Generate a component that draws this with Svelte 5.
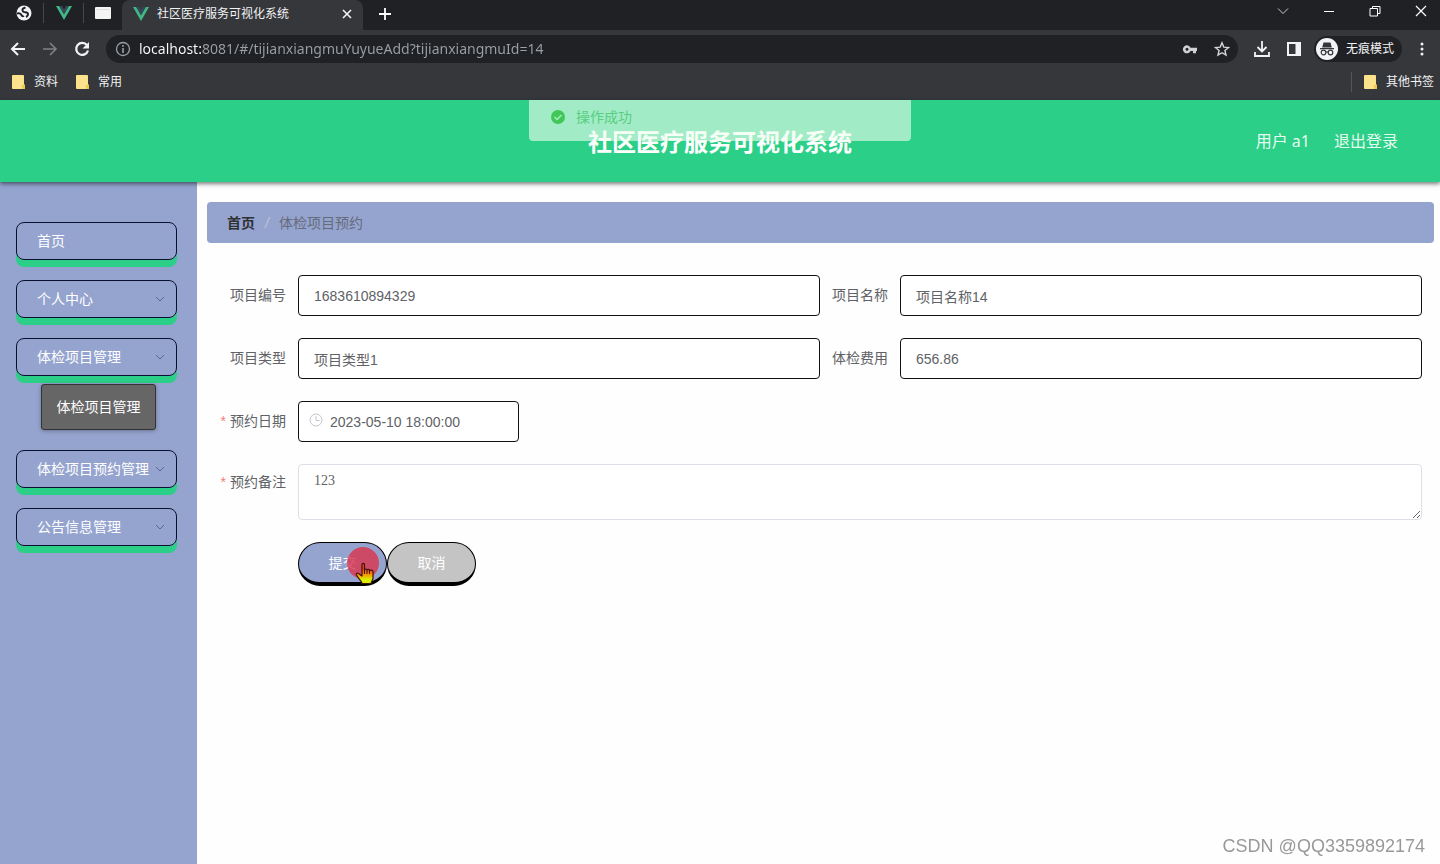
<script lang="ts">
	interface MenuItem { name: string; arrow: boolean; children: string[] }

	const menus: MenuItem[] = [
		{ name: '首页', arrow: false, children: [] },
		{ name: '个人中心', arrow: true, children: [] },
		{ name: '体检项目管理', arrow: true, children: ['体检项目管理'] },
		{ name: '体检项目预约管理', arrow: true, children: [] },
		{ name: '公告信息管理', arrow: true, children: [] },
	];

	const bookmarks = ['资料', '常用'];

	let url = $state('localhost:8081/#/tijianxiangmuYuyueAdd?tijianxiangmuId=14');
	let form = $state({
		bianhao: '1683610894329',
		mingcheng: '项目名称14',
		leixing: '项目类型1',
		feiyong: '656.86',
		riqi: '2023-05-10 18:00:00',
		beizhu: '123',
	});
</script>

{#snippet vue()}
	<svg width="16" height="14" viewBox="0 0 16 14"><path fill="#41b883" d="M0 0h3.2L8 8.3 12.8 0H16L8 14z" /><path fill="#35495e" d="M3.2 0h2.9L8 3.4 9.9 0h2.9L8 8.3z" /></svg>
{/snippet}

{#snippet folder()}
	<svg width="13" height="14" viewBox="0 0 13 14"><path fill="#fce28a" d="M1 0h10a1 1 0 0 1 1 1v8l1 1v3a1 1 0 0 1-1 1H1a1 1 0 0 1-1-1V1a1 1 0 0 1 1-1z" /><path fill="#f0c850" d="M10 10h3v3a1 1 0 0 1-1 1h-2z" /></svg>
{/snippet}

<div class="page">
	<div class="browser">
		<div class="tabs">
			<button class="pin" aria-label="新标签页">
				<svg width="16" height="16" viewBox="0 0 16 16"><circle cx="8" cy="8" r="7.5" fill="#f1f3f4" /><path fill="none" stroke="#202124" stroke-width="2" d="M9.5 2.500C7 3 5.500 4.500 7 6.500c1 1.300 3.200.3 4.500 1.500 1.200 1.300.2 3.200-1.500 4M1 8.500c2-.5 4 .3 4.500 1.700.4 1.200 1.700.8 2 1.800" /></svg>
			</button>
			<button class="pin" aria-label="Vue">{@render vue()}</button>
			<button class="pin" aria-label="窗口">
				<svg width="16" height="12" viewBox="0 0 16 12"><rect width="16" height="12" rx="1" fill="#f4f4f4" /><path stroke="#ddd" d="M1 2.500h14" /></svg>
			</button>
			<div class="tab">
				{@render vue()}
				<span class="tab-title">社区医疗服务可视化系统</span>
				<button aria-label="关闭标签页"><svg width="10" height="10" viewBox="0 0 10 10"><path stroke="#f1f3f4" stroke-width="1.600" d="M1 1l8 8M9 1L1 9" /></svg></button>
			</div>
			<button class="plus" aria-label="打开新的标签页"><svg width="12" height="12" viewBox="0 0 12 12"><path stroke="#fff" stroke-width="1.800" d="M6 0v12M0 6h12" /></svg></button>
			<div class="win">
				<button aria-label="搜索标签页"><svg width="12" height="12" viewBox="0 0 12 12"><path fill="none" stroke="#ccc" d="M1 3.500l5 5 5-5" /></svg></button>
				<button aria-label="最小化"><svg width="12" height="12" viewBox="0 0 12 12"><path stroke="#fff" d="M1 6.500h10" /></svg></button>
				<button aria-label="还原"><svg width="12" height="12" viewBox="0 0 12 12"><path fill="none" stroke="#fff" d="M1 3.500h7.500V11H1zM3.500 3.500v-2h7.500v7H8.500" /></svg></button>
				<button aria-label="关闭"><svg width="12" height="12" viewBox="0 0 12 12"><path stroke="#fff" stroke-width="1.200" d="M1 1l10 10M11 1L1 11" /></svg></button>
			</div>
		</div>

		<div class="toolbar">
			<button aria-label="后退"><svg width="16" height="16" viewBox="0 0 16 16"><path fill="none" stroke="#f1f3f4" stroke-width="2" d="M15 8H2.500M8 2L2 8l6 6" /></svg></button>
			<button aria-label="前进"><svg width="16" height="16" viewBox="0 0 16 16"><path fill="none" stroke="#808185" stroke-width="1.600" d="M1 8h12.500M8 2l6 6-6 6" /></svg></button>
			<button aria-label="刷新"><svg width="16" height="16" viewBox="0 0 16 16"><path fill="none" stroke="#f1f3f4" stroke-width="2.200" d="M13 4.200A6 6 0 1 0 14 9.500" /><path fill="#f1f3f4" d="M15 1v6.500H8.500z" /></svg></button>
			<div class="omnibox">
				<svg width="16" height="16" viewBox="0 0 16 16"><circle cx="8" cy="8" r="6.500" fill="none" stroke="#9aa0a6" stroke-width="1.300" /><path stroke="#9aa0a6" stroke-width="1.600" d="M8 7v5M8 4v1.700" /></svg>
				<input class="url" aria-label="地址" bind:value={url} />
				<button aria-label="密码"><svg width="16" height="16" viewBox="0 0 16 16"><path fill="#d0d1d4" fill-rule="evenodd" d="M8.500 6.700A4 4 0 1 0 8.500 10H11v2.200h3V10h1V6.700zM5 6.800a1.500 1.500 0 1 1 0 3 1.500 1.500 0 0 1 0-3z" /></svg></button>
				<button aria-label="收藏"><svg width="16" height="16" viewBox="0 0 16 16"><path fill="none" stroke="#d5d6d8" stroke-width="1.400" d="M8 1.800l1.800 4.300 4.700.4-3.600 3 1.100 4.600L8 11.700l-4 2.400 1.100-4.600-3.600-3 4.700-.4z" /></svg></button>
			</div>
			<button aria-label="下载"><svg width="16" height="16" viewBox="0 0 16 16"><path fill="none" stroke="#f1f3f4" stroke-width="1.800" d="M8 0v10M3.500 6L8 10.500 12.500 6M1 11v4h14v-4" /></svg></button>
			<button aria-label="侧边栏"><svg width="16" height="16" viewBox="0 0 16 16"><path fill="#f1f3f4" fill-rule="evenodd" d="M1 1h14v14H1zM3 3v10h6.500V3z" /></svg></button>
			<button class="incognito">
				<svg width="22" height="22" viewBox="0 0 22 22"><circle cx="11" cy="11" r="11" fill="#f1f3f4" /><path fill="#35363a" d="M7.500 4.500h7l1.300 5H6.200zM4 10h14v1.200H4z" /><g fill="none" stroke="#35363a" stroke-width="1.200"><circle cx="7.500" cy="14.500" r="2.300" /><circle cx="14.500" cy="14.500" r="2.300" /><path d="M9.800 14h2.400" /></g></svg>
				无痕模式
			</button>
			<button aria-label="菜单"><svg width="16" height="16" viewBox="0 0 16 16"><g fill="#f1f3f4"><circle cx="8" cy="3" r="1.500" /><circle cx="8" cy="8" r="1.500" /><circle cx="8" cy="13" r="1.500" /></g></svg></button>
		</div>

		<div class="bookmarks">
			{#each bookmarks as b}
				<button>{@render folder()}{b}</button>
			{/each}
			<button class="other">{@render folder()}其他书签</button>
		</div>
	</div>

	<header>
		<h1>社区医疗服务可视化系统</h1>
		<div class="user">
			<span>用户 a1</span>
			<a href="#/login">退出登录</a>
		</div>
		<div class="message" role="status">
			<svg width="14" height="14" viewBox="0 0 14 14"><circle cx="7" cy="7" r="7" fill="#41c758" /><path fill="none" stroke="#a5ebc0" stroke-width="1.500" d="M3.500 7l2.500 2.500 4.500-4.500" /></svg>
			操作成功
		</div>
	</header>

	<div class="body">
		<nav>
			{#each menus as m}
				<div class="group">
					<button class="item">
						{m.name}
						{#if m.arrow}
							<svg width="10" height="10" viewBox="0 0 10 10"><path fill="none" stroke="#566794" d="M1 3l4 4 4-4" /></svg>
						{/if}
					</button>
					{#each m.children as c}
						<a class="sub" href="#/tijianxiangmu">{c}</a>
					{/each}
				</div>
			{/each}
		</nav>

		<main>
			<div class="crumb">
				<a href="#/">首页</a>
				<i>/</i>
				<span>体检项目预约</span>
			</div>

			<form onsubmit={(e) => e.preventDefault()}>
				<div class="row">
					<div class="field">
						<label for="bianhao">项目编号</label>
						<input id="bianhao" bind:value={form.bianhao} readonly />
					</div>
					<div class="field">
						<label for="mingcheng">项目名称</label>
						<input id="mingcheng" bind:value={form.mingcheng} readonly />
					</div>
				</div>
				<div class="row">
					<div class="field">
						<label for="leixing">项目类型</label>
						<input id="leixing" bind:value={form.leixing} readonly />
					</div>
					<div class="field">
						<label for="feiyong">体检费用</label>
						<input id="feiyong" bind:value={form.feiyong} readonly />
					</div>
				</div>
				<div class="field">
					<label class="must" for="riqi">预约日期</label>
					<div class="date">
						<svg width="14" height="14" viewBox="0 0 14 14"><g fill="none" stroke="#c0c4cc"><circle cx="7" cy="7" r="6" /><path d="M7 3v4.500h3.500" /></g></svg>
						<input id="riqi" bind:value={form.riqi} />
					</div>
				</div>
				<div class="field">
					<label class="must area" for="beizhu">预约备注</label>
					<textarea id="beizhu" bind:value={form.beizhu}></textarea>
				</div>
				<div class="btns">
					<button class="btn submit" type="submit">
						提交
						<svg class="pointer" width="36" height="40" viewBox="0 0 36 40">
							<circle cx="17" cy="18" r="16" fill="#d9364f" fill-opacity=".82" />
							<defs><linearGradient id="hand" x1="0" y1="0" x2="0" y2="1"><stop offset=".3" stop-color="#e8451c" /><stop offset=".6" stop-color="#f5a500" /><stop offset=".8" stop-color="#d8f000" /></linearGradient></defs>
							<path fill="url(#hand)" stroke="#40140a" stroke-width="1.200" stroke-linejoin="round" d="M16 19.500c0-1.600 2.500-1.600 2.500 0V25c.3-1.400 2.500-1.300 2.500.2.400-1.200 2.400-1 2.500.5.500-1 3.500-.7 3.500.8V33c0 2-1.500 3-2 5.500h-9c-.5-2.500-3-4-5.500-8.500-.9-1.600 1-2.700 2.300-1.300L16 31z" />
							<path stroke="#40140a" d="M18.500 25v4M21 25.500V29M23.500 26v3" />
						</svg>
					</button>
					<button class="btn cancel" type="button">取消</button>
				</div>
			</form>
		</main>
	</div>

	<div class="mark">CSDN @QQ3359892174</div>
</div>

<style>
	:global(body){margin:0;background:#fefefe}
	.page{min-height:100vh;display:flex;flex-direction:column;font:14px/20px "Liberation Sans","Noto Sans CJK SC",sans-serif;color:#606266}
	.page *{box-sizing:border-box}
	button{font:inherit;color:inherit;background:none;border:0;padding:0;cursor:pointer}
	svg{display:block;flex:none}
	a{text-decoration:none;color:inherit}

	.browser{background:#36373b;color:#f1f3f4;font-size:12px}
	.tabs{display:flex;align-items:center;height:30px;background:#202124;padding-left:4px}
	.pin{width:40px;height:20px;margin-bottom:4px;display:flex;align-items:center;justify-content:center;border-right:1px solid #45464a}
	.pin:nth-child(3){border:0;width:38px}
	.tab{width:241px;height:30px;padding:0 11px 3px;display:flex;align-items:center;gap:8px;background:#36373b;border-radius:8px 8px 0 0}
	.tab-title{flex:1}
	.plus{margin:0 0 3px 16px}
	.win{display:flex;gap:34px;margin:0 13px 9px auto}
	.toolbar{display:flex;align-items:center;gap:16px;height:38px;padding:0 10px}
	.omnibox{flex:1;height:28px;border-radius:14px;background:#202124;display:flex;align-items:center;gap:16px;padding:0 8px 0 9px}
	.url{flex:1;min-width:0;height:24px;margin-left:-8px;padding:0;border:0;outline:0;font:14px/24px "Noto Sans","Open Sans",sans-serif;color:transparent;background:linear-gradient(90deg,#fff 64px,#9aa0a6 64px);background-clip:text;-webkit-background-clip:text}
	.incognito{display:flex;align-items:center;gap:8px;height:26px;padding:0 8px 0 2px;margin:0 -4px;border-radius:13px;background:#202124}
	.bookmarks{display:flex;align-items:center;height:32px;padding:0 6px 4px 12px;gap:18px}
	.bookmarks button{display:flex;align-items:center;gap:9px}
	.bookmarks .other{margin-left:auto;padding-left:12px;border-left:1px solid #55565a}

	header{position:relative;z-index:1;display:flex;align-items:center;justify-content:center;height:82px;background:#2bcf87;box-shadow:0 2px 4px rgba(0,0,0,.5);color:#fff}
	h1{margin:0;padding-top:4px;font-size:24px;line-height:36px;font-weight:700}
	.user{position:absolute;right:42px;display:flex;gap:24px;font-size:16px;font-family:"Noto Sans","Noto Sans CJK SC",sans-serif;color:#e4faf0}
	.message{position:absolute;top:0;left:0;right:0;margin:0 auto;width:382px;height:41px;padding:0 22px 8px;display:flex;align-items:center;gap:11px;border-radius:0 0 4px 4px;background:rgba(240,255,240,.6);color:#58cc80}

	.body{flex:1;display:flex}
	nav{width:197px;flex:none;padding:40px 20px 0 16px;background:#95a4cf;color:#fff}
	.group{margin-bottom:20px}
	.item{width:100%;height:38px;padding:0 11px 0 20px;display:flex;align-items:center;justify-content:space-between;white-space:nowrap;border:1px solid #0a1030;border-radius:8px;box-shadow:0 7px 0 #2bcf87}
	.sub{display:block;width:115px;margin:8px auto 0 25px;line-height:44px;text-align:center;background:#666;border:1px solid #333;border-radius:3px;box-shadow:0 1px 4px rgba(0,0,0,.3);position:relative}

	main{flex:1;min-width:0;padding:20px 6px 0 10px}
	.crumb{height:41px;padding:0 20px;display:flex;align-items:center;gap:10px;border-radius:4px;background:#95a4cf;color:#666b7c}
	.crumb a{font-weight:700;color:#303133}
	.crumb i{color:#c0c4cc}
	form{padding:32px 12px 0 11px;display:flex;flex-direction:column;gap:22px}
	.row{display:flex}
	.field{flex:1;display:flex}
	label{flex:none;width:80px;padding-right:12px;line-height:41px;text-align:right}
	label.area{line-height:36px}
	.must::before{content:"*";color:#f08080;margin-right:4px}
	.field input,textarea{flex:1;min-width:0;height:41px;padding:0 15px;border:1px solid #111;border-radius:4px;background:#fff;font:inherit;color:#606266;outline:0}
	.date{position:relative;width:221px;display:flex}
	.date svg{position:absolute;left:11px;top:12px}
	.date input{padding-left:31px}
	.field textarea{height:56px;padding:6px 15px;border-color:#dcdfe6;font-family:"Liberation Serif","Noto Sans CJK SC",serif;resize:vertical}
	.btns{display:flex;padding-left:80px}
	.btn{position:relative;width:89px;height:44px;border:1px solid #000;border-bottom-width:4px;border-radius:22px;color:#fff}
	.submit{background:#95a4cf}
	.cancel{background:#c4c4c4}
	.pointer{position:absolute;left:47px;top:2px;z-index:1}

	.mark{position:fixed;right:15px;bottom:8px;font-size:18px;color:#999}
</style>
